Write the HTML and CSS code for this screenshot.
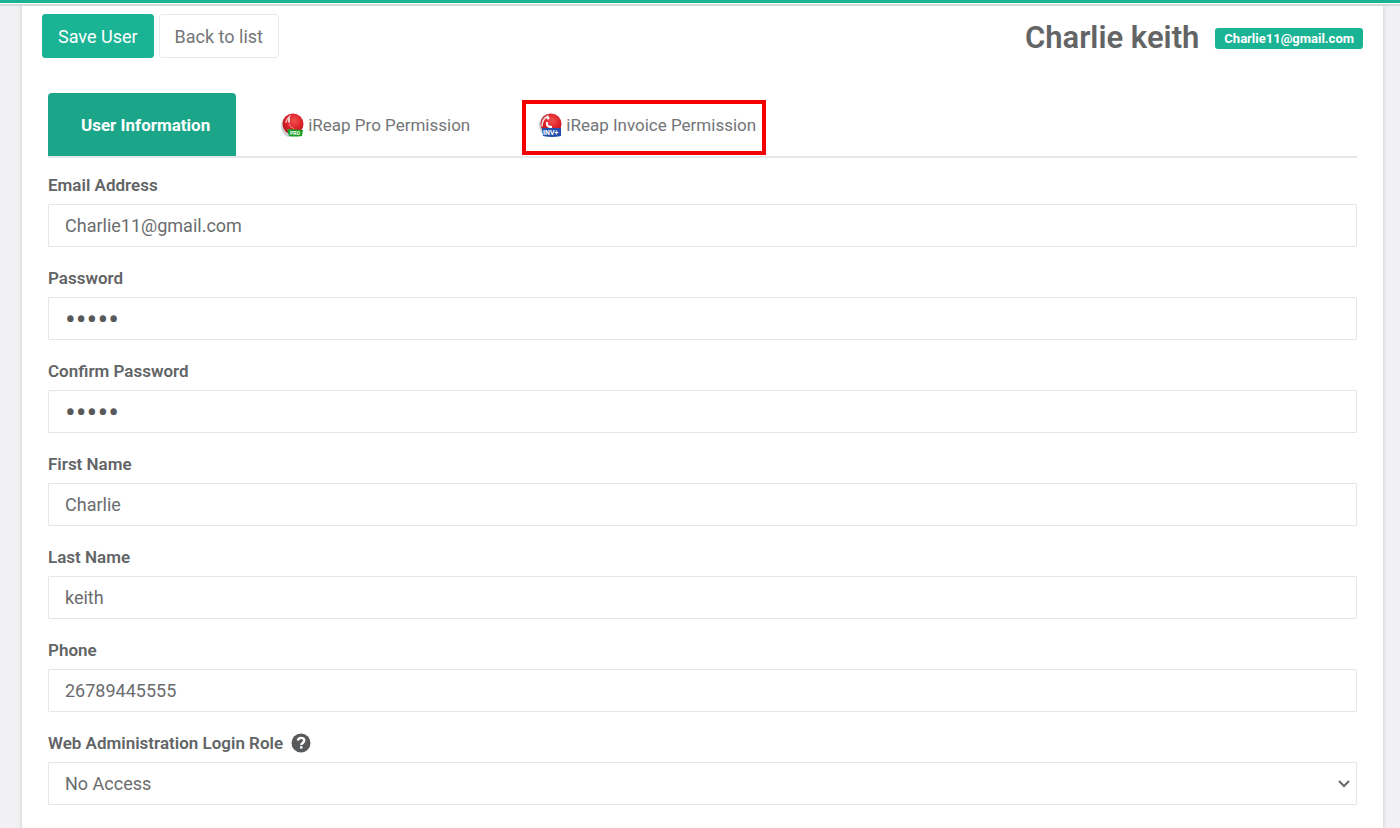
FILE: index.html
```html
<!doctype html>

<html lang="en">
<head>
  <meta charset="utf-8">
  <meta name="viewport" content="width=device-width, initial-scale=1">
  <title>Edit User</title>
  <link rel="stylesheet" href="styles.css">
</head>

<body>
  <div class="topbar"></div>
  <main class="panel">
    <header class="panel-header">
      <div class="actions">
        <button type="submit" form="userForm" class="btn btn-primary">Save User</button>
        <button type="button" class="btn btn-white">Back to list</button>
      </div>
      <div class="user">
        <h1>Charlie keith</h1>
        <span class="label">Charlie11@gmail.com</span>
      </div>
    </header>

    <nav class="tabs">
      <a href="#info" class="tab active">User Information</a>
      <a href="#pro" class="tab">
        <svg class="app-icon" viewBox="0 0 24 26" aria-hidden="true">
          <defs>
            <radialGradient id="ball" cx="55%" cy="35%" r="65%">
              <stop offset="0" stop-color="#f0504e"/>
              <stop offset="0.6" stop-color="#dc1f2a"/>
              <stop offset="1" stop-color="#b01824"/>
            </radialGradient>
          </defs>
          <ellipse cx="10" cy="14" rx="9" ry="11" fill="#d0d1d3"/>
          <circle cx="13" cy="12" r="10.500" fill="url(#ball)"/>
          <path d="M6 10q1-4 4-6" fill="none" stroke="#f8c4c4" stroke-width="1.500" stroke-linecap="round"/>
          <path d="M9 6v4" fill="none" stroke="#fff" stroke-width="1.500" stroke-linecap="round"/>
          <path d="M9 12q1 4 5 4.500" fill="none" stroke="#f08f8f" stroke-width="1"/>
          <path d="M7 17l16 1-1 6q-7 1-13 0z" fill="#19a127"/>
          <text x="10" y="23" class="icon-text icon-text-pro">PRO</text>
        </svg>
        iReap Pro Permission
      </a>
      <a href="#invoice" class="tab highlight">
        <svg class="app-icon" viewBox="0 0 24 26" aria-hidden="true">
          <ellipse cx="10" cy="13" rx="9" ry="11" fill="#d0d1d3"/>
          <circle cx="13" cy="12" r="10.500" fill="url(#ball)"/>
          <path d="M4 14q0-7 6-10" fill="none" stroke="#f3dede" stroke-width="1.500" stroke-linecap="round"/>
          <circle cx="10" cy="6" r="1.500" fill="#fff"/>
          <path d="M9 10v3q1 2 5 2" fill="none" stroke="#fff" stroke-width="2"/>
          <path d="M4 16h19v8q-9 2-18 0z" fill="#2450ae"/>
          <text x="5" y="23" class="icon-text">INV+</text>
        </svg>
        iReap Invoice Permission
      </a>
    </nav>

    <form id="userForm" class="form">
      <div class="form-group">
        <label for="email">Email Address</label>
        <input id="email" type="text" value="Charlie11@gmail.com">
      </div>
      <div class="form-group">
        <label for="password">Password</label>
        <input id="password" type="password" value="12345">
      </div>
      <div class="form-group">
        <label for="confirm">Confirm Password</label>
        <input id="confirm" type="password" value="12345">
      </div>
      <div class="form-group">
        <label for="firstName">First Name</label>
        <input id="firstName" type="text" value="Charlie">
      </div>
      <div class="form-group">
        <label for="lastName">Last Name</label>
        <input id="lastName" type="text" value="keith">
      </div>
      <div class="form-group">
        <label for="phone">Phone</label>
        <input id="phone" type="text" value="26789445555">
      </div>
      <div class="form-group">
        <label for="role">Web Administration Login Role
          <svg class="help" viewBox="0 0 20 20" aria-hidden="true">
            <circle cx="10" cy="10" r="9.500" fill="#58595b"/>
            <path d="M6.800 7.600C7.200 5.700 8.400 4.900 10.100 4.900c1.900 0 3.200 1.100 3.200 2.700 0 2.300-3 2.300-3 4.300" fill="none" stroke="#fff" stroke-width="2.400"/>
            <rect x="9" y="13.200" width="2.500" height="2.400" fill="#fff"/>
          </svg>
        </label>
        <div class="select-wrap">
          <select id="role">
            <option>No Access</option>
          </select>
          <svg class="chevron" viewBox="0 0 12 8" aria-hidden="true">
            <path d="M1 1l5 5 5-5" fill="none" stroke="#68696b" stroke-width="2"/>
          </svg>
        </div>
      </div>
    </form>
  </main>
</body>
</html>
```

FILE: styles.css
```css
* {
  box-sizing: border-box;
}

body {
  margin: 0;
  background-color: #f1f1f3;
  color: #626466;
  font-family: Roboto, sans-serif;
  font-size: 18px;
}

/* position keeps the panel shadow off the bar */
.topbar {
  position: relative;
  height: 6px;
  background: #fff;
  border-top: 3px solid #1ab394;
  border-bottom: 2px solid #d3dbda;
}

.panel {
  min-height: calc(100vh - 6px);
  margin: 0 17px 0 22px;
  padding: 8px 20px 0;
  background: #fff;
  box-shadow: 0 0 3px 1px #d4d5d7;
}

.panel-header {
  display: flex;
  justify-content: space-between;
  align-items: center;
}

.actions {
  display: flex;
  gap: 5px;
}

.btn {
  height: 44px;
  padding: 0 15px;
  border: 1px solid #e7eaec;
  border-radius: 3px;
  font-family: inherit;
  font-size: 18px;
  cursor: pointer;
}

.btn-primary {
  background: #1ab394;
  border-color: #1ab394;
  color: #fff;
}

.btn-white {
  background: #fff;
  color: #737577;
}

.user {
  display: flex;
  align-items: center;
  gap: 16px;
  padding-top: 4px;
}

h1 {
  margin: 0;
  font-size: 31px;
  font-weight: 600;
  line-height: 40px;
}

.label {
  padding: 0 9px;
  border-radius: 3px;
  background: #1ab394;
  color: #fff;
  font-size: 13px;
  font-weight: 700;
  line-height: 21px;
}

.tabs {
  display: flex;
  gap: 17px;
  margin: 35px 6px 0;
  border-bottom: 2px solid #e6e7e8;
}

.tab {
  position: relative;
  display: flex;
  align-items: center;
  gap: 4px;
  height: 63px;
  padding: 0 24px 0 27px;
  color: #737577;
  font-size: 17px;
  text-decoration: none;
}

.tab.active {
  padding: 0 26px 0 33px;
  border-radius: 4px 4px 0 0;
  background: #1ca689;
  color: #fff;
  font-weight: 700;
}

.tab.highlight::after {
  content: "";
  position: absolute;
  inset: 7px 14px 1px 11px;
  border: 4px solid #f50000;
}

.app-icon {
  width: 24px;
  height: 26px;
}

.icon-text {
  fill: #fff;
  font-size: 7px;
  font-weight: 700;
}

.icon-text-pro {
  font-size: 5px;
}

.form {
  padding: 15px 6px 0;
}

.form-group {
  margin-bottom: 19px;
}

label {
  display: flex;
  align-items: center;
  gap: 8px;
  height: 24px;
  margin-bottom: 7px;
  font-size: 17px;
  font-weight: 600;
}

.help {
  width: 20px;
  height: 20px;
}

input,
select {
  display: block;
  width: 100%;
  height: 43px;
  padding: 0 16px;
  border: 1px solid #e5e6e7;
  border-radius: 1px;
  background: #fff;
  color: #6a6c6e;
  font-family: inherit;
  font-size: 18px;
}

/* bigger bullets */
input[type="password"] {
  color: #58595b;
  font-size: 32px;
}

select {
  appearance: none;
}

.select-wrap {
  position: relative;
}

.chevron {
  position: absolute;
  top: 18px;
  right: 7px;
  width: 12px;
  height: 8px;
  pointer-events: none;
}
```
